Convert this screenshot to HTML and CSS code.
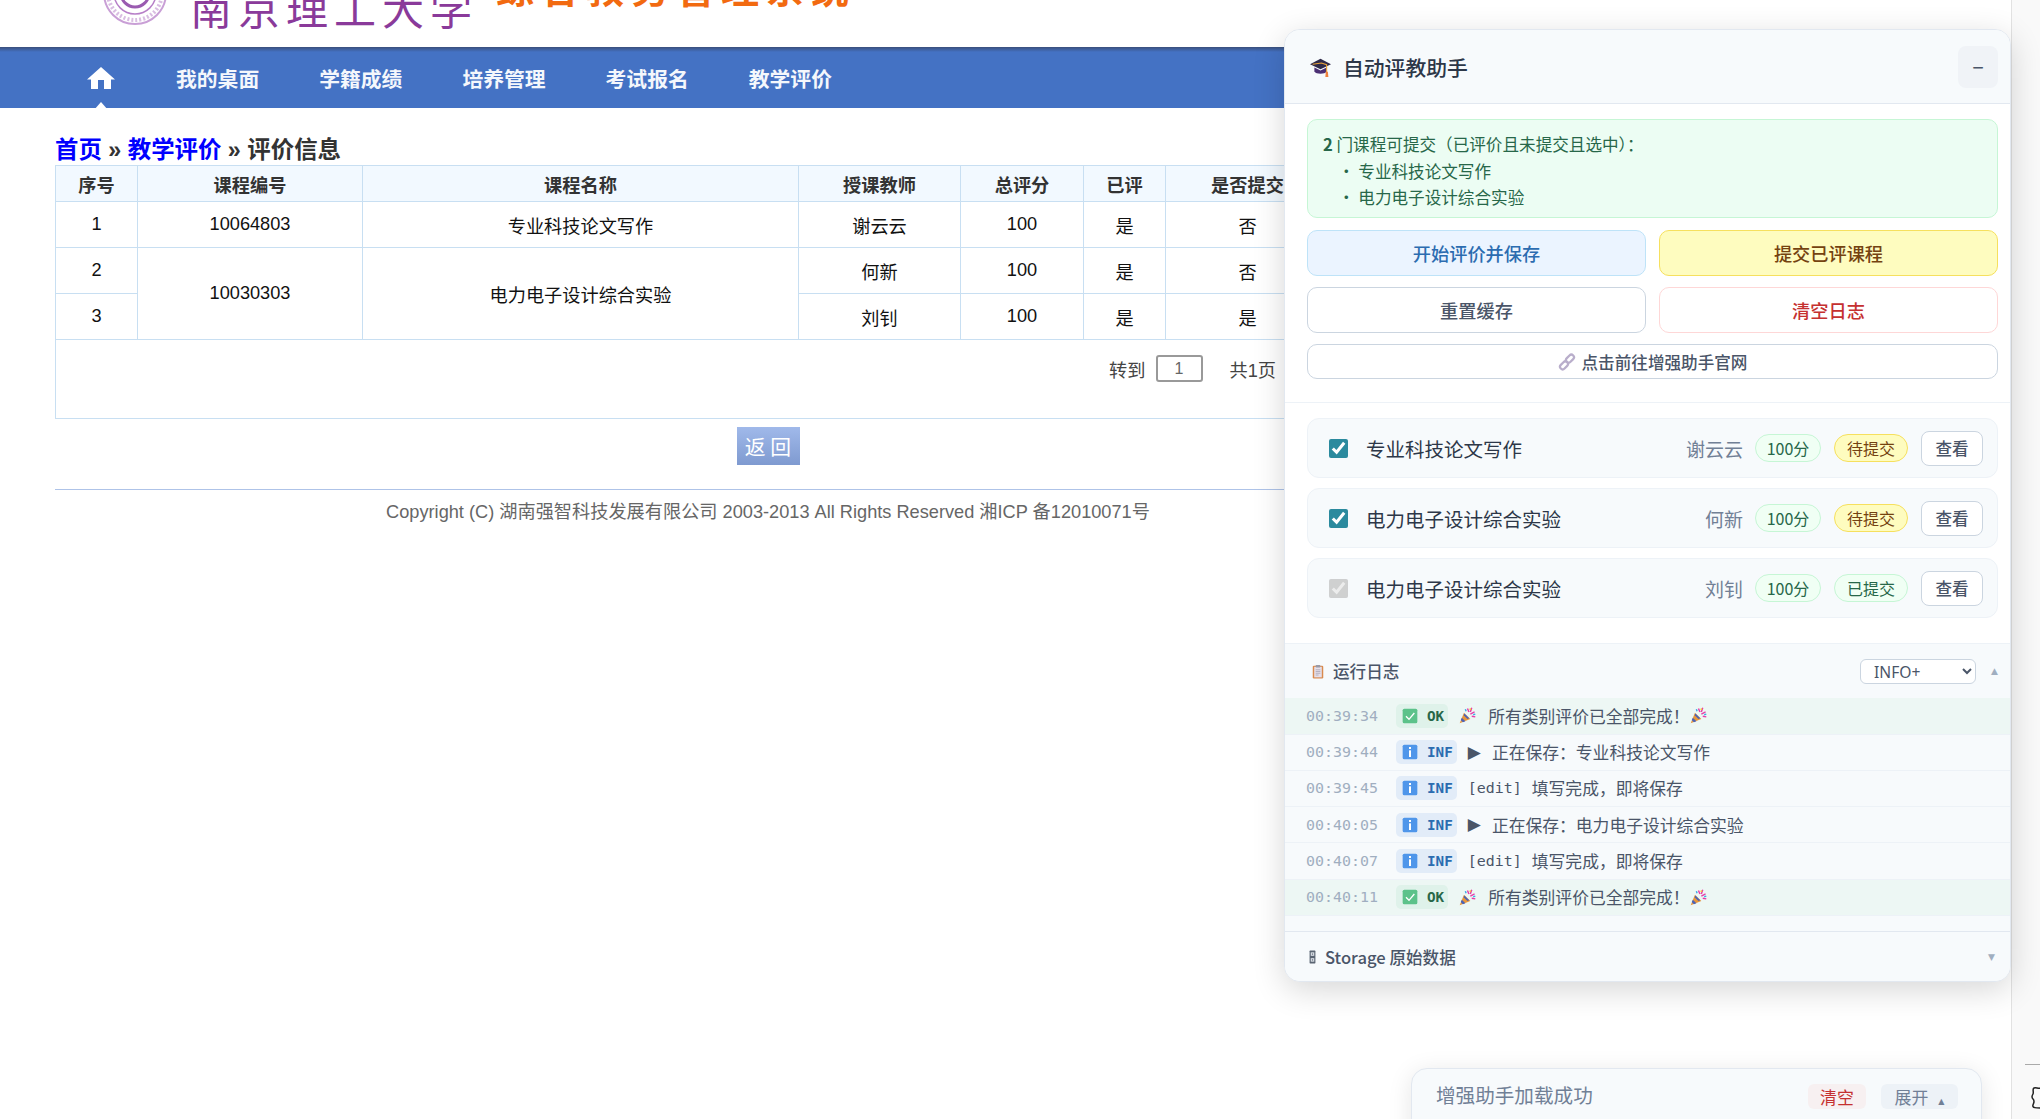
FILE: index.html
```html
<!DOCTYPE html>
<html>
<head>
    <title>评价信息</title>
    <meta charset="UTF-8" />
    <link rel="stylesheet" href="styles.css">
</head>
<body>
    <svg class="defs" width="0" height="0">
        <symbol id="icoCap" viewBox="0 0 24 24">
            <path d="M12 3 24 9.500 12 15 0 9.500Z" fill="#2f2a4a"/>
            <path d="M5 13v5c2 3 12 3 14 0v-5l-7 3.500Z" fill="#4b2f74"/>
            <path d="M3 9.500 13 8l6 2v9" fill="none" stroke="#e8a33a" stroke-width="1.300"/>
            <path d="M18 18h2.400l.6 6h-3.400Z" fill="#f0803c"/>
        </symbol>
        <symbol id="icoLink" viewBox="0 0 24 24">
            <g fill="none" stroke="#b9aecb" stroke-width="3">
                <rect x="2" y="13" width="12" height="7" rx="3.500" transform="rotate(-45 8 16.500)"/>
                <rect x="10" y="4" width="12" height="7" rx="3.500" transform="rotate(-45 16 7.500)"/>
            </g>
        </symbol>
        <symbol id="icoClip" viewBox="0 0 24 24">
            <rect x="3" y="2" width="18" height="22" rx="2" fill="#d98a4e"/>
            <rect x="5.500" y="4" width="13" height="18" fill="#e6dfe9"/>
            <rect x="8" y="1" width="8" height="4" rx="1" fill="#9a9aa6"/>
            <path d="M8 9h8M8 12h8M8 15h8M8 18h5" stroke="#a8a3b3" stroke-width="1.300"/>
        </symbol>
        <symbol id="icoCheck" viewBox="0 0 24 24">
            <rect x="1" y="1" width="22" height="22" rx="2.500" fill="#5cc28a"/>
            <path d="M6 12.500l4.500 4.500L18.500 7.500" fill="none" stroke="#fff" stroke-width="2"/>
        </symbol>
        <symbol id="icoInfo" viewBox="0 0 24 24">
            <rect x="1" y="1" width="22" height="22" rx="2.500" fill="#4f96ea"/>
            <rect x="10.500" y="4.500" width="3" height="3" fill="#fff"/>
            <rect x="10.500" y="9.500" width="3" height="10" fill="#fff"/>
        </symbol>
        <symbol id="icoParty" viewBox="0 0 24 24">
            <path d="M1 23 7 8l9 9Z" fill="#e9973c"/>
            <path d="M4 15l5 5-3.500 1.500-3-3ZM7.500 9l7 7-2.500 1-5.500-5.500Z" fill="#4a63b8"/>
            <path d="M12 2l2 5M18 1l-2 6M22 7l-6 3M23 14l-5-1" stroke="#e63fa8" stroke-width="2" fill="none"/>
            <path d="M9 3l1 3M20 11l3-1" stroke="#3fa9e6" stroke-width="2" fill="none"/>
            <circle cx="16" cy="3" r="1.300" fill="#f5c33b"/>
        </symbol>
        <symbol id="icoBox" viewBox="0 0 12 24">
            <rect x="1" y="1" width="10" height="22" rx="1" fill="#5a6472"/>
            <rect x="3" y="4" width="6" height="6" fill="#d9dee5"/>
            <rect x="3" y="14" width="6" height="6" fill="#d9dee5"/>
            <rect x="5" y="6" width="2" height="2" fill="#5a6472"/>
            <rect x="5" y="16" width="2" height="2" fill="#5a6472"/>
        </symbol>
    </svg>

    <div class="logo">
        <svg class="seal" width="64" height="64" viewBox="0 0 64 64">
            <circle cx="32" cy="32" r="31" fill="#fff" stroke="#c99fd6" stroke-width="2"/>
            <circle cx="32" cy="32" r="27" fill="none" stroke="#d9bde2" stroke-width="4" stroke-dasharray="2 2"/>
            <circle cx="32" cy="32" r="21" fill="none" stroke="#b77fc8" stroke-width="1.500"/>
            <circle cx="32" cy="32" r="14" fill="none" stroke="#9a5bb0" stroke-width="3"/>
        </svg>
        <span class="logoName">南京理工大学</span>
        <span class="logoSystem">综合教务管理系统</span>
    </div>

    <div class="nav">
        <div class="navHome">
            <svg width="28" height="22" viewBox="0 0 28 22">
                <path d="M14 0 28 12.500H24V22H17V13H11V22H4V12.500H0Z" fill="#fff"/>
            </svg>
        </div>
        <a class="navItem">我的桌面</a>
        <a class="navItem">学籍成绩</a>
        <a class="navItem">培养管理</a>
        <a class="navItem">考试报名</a>
        <a class="navItem">教学评价</a>
    </div>

    <div class="content">
        <div class="crumbs"><a>首页</a> » <a>教学评价</a> » 评价信息</div>
        <table class="grid">
            <colgroup>
                <col class="colNo"><col class="colCode"><col class="colName"><col class="colTeacher">
                <col class="colScore"><col class="colDone"><col class="colSent"><col class="colRest">
            </colgroup>
            <tr class="head">
                <th>序号</th><th>课程编号</th><th>课程名称</th><th>授课教师</th><th>总评分</th><th>已评</th><th>是否提交</th><th>操作</th>
            </tr>
            <tr>
                <td>1</td><td>10064803</td><td>专业科技论文写作</td><td>谢云云</td><td>100</td><td>是</td><td>否</td><td></td>
            </tr>
            <tr>
                <td>2</td><td rowspan="2">10030303</td><td rowspan="2">电力电子设计综合实验</td><td>何新</td><td>100</td><td>是</td><td>否</td><td></td>
            </tr>
            <tr>
                <td>3</td><td>刘钊</td><td>100</td><td>是</td><td>是</td><td></td>
            </tr>
            <tr>
                <td colspan="8" class="pagerCell">
                    <div class="pager">
                        <span>转到</span>
                        <input class="pageInput" type="text" value="1">
                        <span class="pageTotal">共1页</span>
                    </div>
                </td>
            </tr>
        </table>
        <div class="backRow"><button class="back">返 回</button></div>
        <div class="copyright">Copyright (C) 湖南强智科技发展有限公司 2003-2013 All Rights Reserved 湘ICP 备12010071号</div>
    </div>

    <div class="strip">
        <div class="stripLine"></div>
        <svg class="stripIcon" width="10" height="22" viewBox="0 0 10 22">
            <path d="M10 1C7 2 5 0 3 1S3 5 2 7 0 10 2 12 3 15 2 18 5 21 10 21" fill="none" stroke="#222" stroke-width="1.500"/>
        </svg>
    </div>

    <div class="toast">
        <span class="toastText">增强助手加载成功</span>
        <button class="toastClear">清空</button>
        <button class="toastOpen">展开<span class="toastArrow">▲</span></button>
    </div>

    <div class="panel">
        <div class="panelHead">
            <svg class="icoTitle"><use href="#icoCap"/></svg>
            <span class="panelTitle">自动评教助手</span>
            <button class="panelMin">−</button>
        </div>

        <div class="panelTop">
            <div class="notice">
                <div><b>2</b> 门课程可提交（已评价且未提交且选中）：</div>
                <div class="noticeItem">· 专业科技论文写作</div>
                <div class="noticeItem">· 电力电子设计综合实验</div>
            </div>
            <div class="actions">
                <button class="btn btnStart">开始评价并保存</button>
                <button class="btn btnSubmit">提交已评课程</button>
                <button class="btn btnReset">重置缓存</button>
                <button class="btn btnClear">清空日志</button>
                <button class="btn btnLink"><svg class="icoLink"><use href="#icoLink"/></svg>点击前往增强助手官网</button>
            </div>
        </div>

        <div class="courses">
            <div class="course">
                <input class="courseCheck" type="checkbox" checked>
                <span class="courseName">专业科技论文写作</span>
                <span class="courseTeacher">谢云云</span>
                <span class="pill pillGreen pillScore">100分</span>
                <span class="pill pillYellow">待提交</span>
                <button class="viewBtn">查看</button>
            </div>
            <div class="course">
                <input class="courseCheck" type="checkbox" checked>
                <span class="courseName">电力电子设计综合实验</span>
                <span class="courseTeacher">何新</span>
                <span class="pill pillGreen pillScore">100分</span>
                <span class="pill pillYellow">待提交</span>
                <button class="viewBtn">查看</button>
            </div>
            <div class="course">
                <input class="courseCheck" type="checkbox" checked disabled>
                <span class="courseName">电力电子设计综合实验</span>
                <span class="courseTeacher">刘钊</span>
                <span class="pill pillGreen pillScore">100分</span>
                <span class="pill pillGreen">已提交</span>
                <button class="viewBtn">查看</button>
            </div>
        </div>

        <div class="logs">
            <div class="logsHead">
                <svg class="icoClip"><use href="#icoClip"/></svg>
                <span class="logsTitle">运行日志</span>
                <select class="logsLevel"><option>INFO+</option></select>
                <span class="fold">▲</span>
            </div>
            <div class="logRow logOk">
                <span class="logTime">00:39:34</span>
                <span class="tag tagOk"><svg class="icoTag"><use href="#icoCheck"/></svg>OK</span>
                <svg class="icoParty"><use href="#icoParty"/></svg>
                <span class="logMsg">所有类别评价已全部完成！</span>
                <svg class="icoParty"><use href="#icoParty"/></svg>
            </div>
            <div class="logRow">
                <span class="logTime">00:39:44</span>
                <span class="tag tagInf"><svg class="icoTag"><use href="#icoInfo"/></svg>INF</span>
                <span class="logPlay">▶</span>
                <span class="logMsg">正在保存：专业科技论文写作</span>
            </div>
            <div class="logRow">
                <span class="logTime">00:39:45</span>
                <span class="tag tagInf"><svg class="icoTag"><use href="#icoInfo"/></svg>INF</span>
                <span class="logCode">[edit]</span>
                <span class="logMsg">填写完成，即将保存</span>
            </div>
            <div class="logRow">
                <span class="logTime">00:40:05</span>
                <span class="tag tagInf"><svg class="icoTag"><use href="#icoInfo"/></svg>INF</span>
                <span class="logPlay">▶</span>
                <span class="logMsg">正在保存：电力电子设计综合实验</span>
            </div>
            <div class="logRow">
                <span class="logTime">00:40:07</span>
                <span class="tag tagInf"><svg class="icoTag"><use href="#icoInfo"/></svg>INF</span>
                <span class="logCode">[edit]</span>
                <span class="logMsg">填写完成，即将保存</span>
            </div>
            <div class="logRow logOk">
                <span class="logTime">00:40:11</span>
                <span class="tag tagOk"><svg class="icoTag"><use href="#icoCheck"/></svg>OK</span>
                <svg class="icoParty"><use href="#icoParty"/></svg>
                <span class="logMsg">所有类别评价已全部完成！</span>
                <svg class="icoParty"><use href="#icoParty"/></svg>
            </div>
            <div class="storage">
                <svg class="icoBox"><use href="#icoBox"/></svg>
                <span class="storageTitle">Storage 原始数据</span>
                <span class="fold">▼</span>
            </div>
        </div>
    </div>
</body>
</html>
```

FILE: styles.css
```css
body
{
    margin: 0;
    height: 1119px;
    overflow: hidden;
    position: relative;
    background-color: #fff;
    font-family: "Liberation Sans", "Noto Sans CJK SC", sans-serif;
    color: #333;
}

button
{
    font-family: "Noto Sans CJK SC", sans-serif;
    cursor: pointer;
}

.defs
{
    position: absolute;
}

/* header */
.logo
{
    display: flex;
    align-items: flex-end;
    height: 47px;
    padding: 0 0 22px 103px;
    box-sizing: border-box;
    overflow: hidden;
}

.seal
{
    flex: none;
}

.logoName
{
    flex: none;
    margin-left: 23px;
    font-family: "Noto Sans CJK SC", sans-serif;
    font-size: 42px;
    line-height: 42px;
    letter-spacing: 6px;
    color: #8a3a9a;
    margin-bottom: -3px;
}

.logoSystem
{
    flex: none;
    margin-left: 18px;
    margin-bottom: 19px;
    font-family: "Noto Sans CJK SC", sans-serif;
    font-weight: bold;
    font-size: 38px;
    line-height: 38px;
    letter-spacing: 7px;
    color: #f26a10;
}

.nav
{
    display: flex;
    align-items: center;
    gap: 60px;
    height: 61px;
    padding-left: 87px;
    background: linear-gradient(#3a4f7c 0, #4472c4 5px);
}

.navHome
{
    position: relative;
    display: flex;
    margin-right: 1px;
}

.navHome::after
{
    content: "";
    position: absolute;
    left: 7px;
    top: 35px;
    border-left: 7px solid transparent;
    border-right: 7px solid transparent;
    border-bottom: 8px solid #fff;
}

.navItem
{
    font-family: "Noto Sans CJK SC", sans-serif;
    font-size: 20.800px;
    font-weight: bold;
    color: #f4f7fc;
}

/* page */
.content
{
    width: 1426px;
    margin-left: 55px;
}

.crumbs
{
    margin-top: 28px;
    height: 29px;
    line-height: 29px;
    font-size: 23.400px;
    font-weight: bold;
}

.crumbs a
{
    color: #00f;
}

.grid
{
    width: 100%;
    table-layout: fixed;
    border-collapse: collapse;
    font-size: 18.200px;
    color: #111;
}

.grid th, .grid td
{
    border: 1px solid #c8dff2;
    padding: 0;
    text-align: center;
    height: 45px;
    font-weight: normal;
}

.grid .head th
{
    height: 35px;
    background-color: #f2f9ff;
    font-weight: bold;
    color: #333;
}

.colNo { width: 82px; }
.colCode { width: 225px; }
.colName { width: 436px; }
.colTeacher { width: 162px; }
.colScore { width: 123px; }
.colDone { width: 82px; }
.colSent { width: 164px; }

.grid .pagerCell
{
    height: 78px;
    vertical-align: top;
}

.pager
{
    display: flex;
    justify-content: flex-end;
    align-items: center;
    gap: 10px;
    padding: 15px 204px 0 0;
    color: #444;
}

.pageInput
{
    width: 47px;
    height: 27px;
    box-sizing: border-box;
    border: 2px solid #999;
    border-radius: 3px;
    padding: 0;
    text-align: center;
    font-size: 16px;
    font-family: "Liberation Sans", sans-serif;
    color: #666;
}

.pageTotal
{
    margin-left: 17px;
}

.backRow
{
    display: flex;
    justify-content: center;
    margin-top: 8px;
    padding-bottom: 24px;
    border-bottom: 1px solid #aec3e8;
}

.back
{
    width: 63px;
    height: 38px;
    border: 0;
    padding: 0;
    background: linear-gradient(#a0b9ea, #7f9ad0);
    color: #fff;
    font-size: 20.800px;
}

.copyright
{
    margin-top: 11px;
    line-height: 22px;
    text-align: center;
    font-size: 18.200px;
    color: #666;
}

/* right strip */
.strip
{
    position: absolute;
    top: 0;
    right: 0;
    bottom: 0;
    width: 28px;
    background-color: #f9f9f9;
    border-left: 1px solid #e2e2e2;
}

.stripLine
{
    position: absolute;
    top: 1064px;
    left: 13px;
    right: 0;
    height: 1px;
    background-color: #aaa;
}

.stripIcon
{
    position: absolute;
    top: 1087px;
    left: 19px;
}

/* helper panel */
.panel
{
    position: absolute;
    top: 29px;
    left: 1284px;
    width: 727px;
    height: 953px;
    box-sizing: border-box;
    display: flex;
    flex-direction: column;
    overflow: hidden;
    background-color: #fff;
    border: 1px solid #e2e8f0;
    border-radius: 16px;
    box-shadow: 0 8px 32px rgba(0, 0, 0, 0.16);
    font-family: "Noto Sans CJK SC", sans-serif;
    color: #2d3748;
}

.panelHead
{
    display: flex;
    align-items: center;
    height: 76px;
    box-sizing: border-box;
    padding: 0 12px 0 25px;
    background-color: #f7fafc;
    border-bottom: 1px solid #e2e8f0;
}

.icoTitle
{
    width: 21px;
    height: 21px;
    margin-right: 12px;
}

.panelTitle
{
    flex: 1;
    font-size: 20.800px;
    font-weight: 500;
}

.panelMin
{
    width: 40px;
    height: 42px;
    border: 0;
    border-radius: 8px;
    padding: 0;
    background-color: #f0f3f7;
    color: #4a5568;
    font-size: 20px;
}

.panelTop
{
    padding: 15px 12px 23px 22px;
    border-bottom: 1px solid #edf2f7;
}

.notice
{
    height: 99px;
    box-sizing: border-box;
    padding: 11px 15px;
    background-color: #ecfdf3;
    border: 1px solid #c6f6d5;
    border-radius: 10px;
    font-size: 16.600px;
    line-height: 26.500px;
    color: #276749;
}

.noticeItem
{
    padding-left: 15px;
}

.actions
{
    display: grid;
    grid-template-columns: 1fr 1fr;
    grid-template-rows: 46px 46px 35px;
    column-gap: 13px;
    row-gap: 11px;
    margin-top: 12px;
}

.btn
{
    display: flex;
    align-items: center;
    justify-content: center;
    border-radius: 10px;
    border: 1px solid #cbd5e0;
    background-color: #fff;
    padding: 0;
    font-size: 18.200px;
    font-weight: 500;
    color: #4a5568;
}

.btnStart
{
    background-color: #ebf4ff;
    border-color: #bee3f8;
    color: #2b6cb0;
}

.btnSubmit
{
    background-color: #fefcbf;
    border-color: #f6e05e;
    color: #744210;
}

.btnClear
{
    border-color: #fed7d7;
    color: #c53030;
}

.btnLink
{
    grid-column: 1 / 3;
    font-size: 16.600px;
}

.icoLink
{
    width: 18px;
    height: 18px;
    margin-right: 6px;
}

.courses
{
    display: flex;
    flex-direction: column;
    gap: 10px;
    padding: 15px 12px 25px 22px;
}

.course
{
    display: flex;
    align-items: center;
    height: 60px;
    box-sizing: border-box;
    padding: 0 14px 0 21px;
    background-color: #f7fafc;
    border: 1px solid #edf2f7;
    border-radius: 12px;
}

.courseCheck
{
    width: 19px;
    height: 19px;
    margin: 0 18px 0 0;
    accent-color: #2b8a9e;
}

.courseName
{
    flex: 1;
    font-size: 19.500px;
}

.courseTeacher
{
    margin-right: 12px;
    font-size: 19px;
    color: #718096;
}

.pill
{
    display: flex;
    align-items: center;
    justify-content: center;
    width: 74px;
    height: 28px;
    box-sizing: border-box;
    border: 1px solid;
    border-radius: 14px;
    font-size: 16px;
}

.pillScore
{
    width: 66px;
    margin-right: 13px;
}

.pillGreen
{
    background-color: #f0fff4;
    border-color: #c6f6d5;
    color: #276749;
}

.pillYellow
{
    background-color: #fefcbf;
    border-color: #f6e05e;
    color: #744210;
}

.viewBtn
{
    width: 62px;
    height: 35px;
    margin-left: 13px;
    padding: 0;
    background-color: #fff;
    border: 1px solid #cbd5e0;
    border-radius: 8px;
    font-size: 16.600px;
    font-weight: 500;
    color: #4a5568;
}

.logs
{
    flex: 1;
    background-color: #f7fafc;
    border-top: 1px solid #edf2f7;
}

.logsHead
{
    display: flex;
    align-items: center;
    height: 54px;
    padding: 0 12px 0 26px;
    box-sizing: border-box;
}

.icoClip
{
    width: 14px;
    height: 17px;
    margin-right: 8px;
}

.logsTitle
{
    flex: 1;
    font-size: 16.600px;
    font-weight: 500;
    color: #4a5568;
}

.logsLevel
{
    width: 116px;
    height: 25px;
    margin-right: 15px;
    padding: 0 0 0 9px;
    background-color: #fff;
    border: 1px solid #cbd5e0;
    border-radius: 6px;
    font-family: "Noto Sans", sans-serif;
    font-size: 15.600px;
    color: #4a5568;
}

.fold
{
    font-family: "DejaVu Sans", sans-serif;
    font-size: 9px;
    color: #a0aec0;
}

.logRow
{
    display: flex;
    align-items: center;
    height: 36.300px;
    box-sizing: border-box;
    padding-left: 21px;
    border-bottom: 1px solid #edf2f7;
    font-size: 16.800px;
    color: #4a5568;
}

.logOk
{
    background-color: #edf7f4;
}

.logTime
{
    width: 90px;
    font-family: "DejaVu Sans Mono", monospace;
    font-size: 14.950px;
    color: #a0aec0;
}

.tag
{
    display: flex;
    align-items: center;
    height: 24px;
    box-sizing: border-box;
    padding: 0 4px 0 6px;
    margin-right: 11px;
    border-radius: 5px;
    font-family: "DejaVu Sans Mono", monospace;
    font-size: 14.300px;
    font-weight: bold;
}

.tagOk
{
    background-color: #dff2ea;
    color: #276749;
}

.tagInf
{
    background-color: #e2ecf8;
    color: #2b6cb0;
}

.icoTag
{
    width: 16px;
    height: 16px;
    margin-right: 9px;
}

.icoParty
{
    width: 17px;
    height: 17px;
    margin-right: 12px;
}

.logOk .tag
{
    margin-right: 11px;
}

.logPlay
{
    margin-right: 11px;
    font-family: "DejaVu Sans", sans-serif;
    font-size: 17px;
    line-height: 17px;
}

.logCode
{
    margin-right: 10px;
    font-family: "DejaVu Sans Mono", monospace;
    font-size: 14.950px;
}

.logMsg
{
    font-family: "Noto Sans CJK SC", sans-serif;
}

.storage
{
    display: flex;
    align-items: center;
    height: 50px;
    margin-top: 15px;
    padding: 0 15px 0 23px;
    box-sizing: border-box;
    border-top: 1px solid #e2e8f0;
}

.icoBox
{
    width: 9px;
    height: 14px;
    margin-right: 8px;
}

.storageTitle
{
    flex: 1;
    font-size: 16.600px;
    font-weight: 500;
    color: #4a5568;
}

/* toast */
.toast
{
    position: absolute;
    top: 1068px;
    left: 1411px;
    width: 571px;
    height: 80px;
    box-sizing: border-box;
    display: flex;
    align-items: flex-start;
    padding: 15px 23px 0 24px;
    background-color: #f7fafc;
    border: 1px solid #e2e8f0;
    border-radius: 16px;
    box-shadow: 0 4px 24px rgba(0, 0, 0, 0.1);
}

.toastText
{
    flex: 1;
    font-family: "Liberation Serif", "Noto Sans CJK SC", serif;
    font-size: 19.600px;
    line-height: 26px;
    color: #718096;
}

.toastClear, .toastOpen
{
    height: 25px;
    border: 0;
    border-radius: 6px;
    padding: 0;
    font-size: 16.900px;
    line-height: 25px;
}

.toastClear
{
    width: 58px;
    margin-right: 15px;
    background-color: #f7f0f1;
    color: #c53030;
}

.toastOpen
{
    width: 77px;
    background-color: #edf2f7;
    color: #718096;
}

.toastArrow
{
    margin-left: 10px;
    font-family: "DejaVu Sans", sans-serif;
    font-size: 8px;
}
```
